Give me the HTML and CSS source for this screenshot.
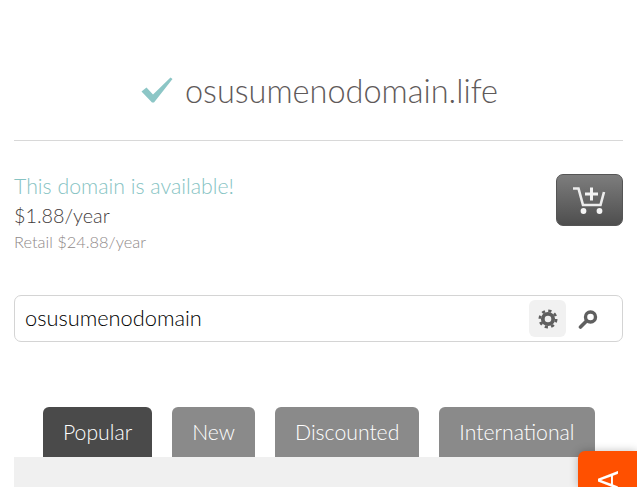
FILE: index.html
```html
<!DOCTYPE html>
<html lang="en">
<head>
<meta charset="utf-8">
<title>osusumenodomain.life</title>
<link rel="stylesheet" href="styles.css">
</head>
<body>
<main class="page">
  <header class="result-head">
    <svg class="check" viewBox="0 0 32 26" width="32" height="26" aria-hidden="true"><path d="M0.5 14.5 L5.5 10.5 L12 17.5 L29.5 0.5 L31.5 2 L13 25.5 L11 25.5 Z" fill="#8cc6c6"/></svg>
    <h1 class="domain">osusumenodomain.life</h1>
  </header>
  <section class="offer">
    <div class="offer-text">
      <p class="available">This domain is available!</p>
      <p class="price">$1.88/year</p>
      <p class="retail">Retail $24.88/year</p>
    </div>
    <button class="cart" type="button" aria-label="Add to cart">
      <svg viewBox="0 0 34 30" width="34" height="30" aria-hidden="true">
        <path d="M0 3.5 H5.5 L10 20 H27.5 L31 7" fill="none" stroke="#ececec" stroke-width="2.6"/>
        <path d="M12 9 H25 M18.5 2.5 V15.5" fill="none" stroke="#f4f4f4" stroke-width="3"/>
        <circle cx="10.5" cy="26" r="2.9" fill="#f4f4f4"/>
        <circle cx="26.5" cy="26" r="2.9" fill="#f4f4f4"/>
      </svg>
    </button>
  </section>
  <form class="search">
    <span class="query">osusumenodomain</span>
    <span class="gear-box">
      <svg viewBox="0 0 20 20" width="20" height="20" aria-hidden="true">
        <circle cx="10" cy="10" r="8.2" fill="none" stroke="#5f5f5f" stroke-width="2.6" stroke-dasharray="3.2 3.24"/>
        <circle cx="10" cy="10" r="5.2" fill="none" stroke="#5f5f5f" stroke-width="3.8"/>
      </svg>
    </span>
    <span class="magnifier">
      <svg viewBox="0 0 20 20" width="20" height="20" aria-hidden="true">
        <circle cx="12.5" cy="8" r="5" fill="none" stroke="#5f5f5f" stroke-width="3.4"/>
        <path d="M8.5 12 L2.5 18" stroke="#5f5f5f" stroke-width="3.6" stroke-linecap="round"/>
      </svg>
    </span>
  </form>
  <nav class="tabs">
    <a class="tab active">Popular</a>
    <a class="tab">New</a>
    <a class="tab">Discounted</a>
    <a class="tab">International</a>
  </nav>
  <div class="panel"></div>
</main>
<aside class="feedback"><span class="feedback-text">A</span></aside>
</body>
</html>
```
FILE: styles.css
```css
* { box-sizing: border-box; }
html, body { margin: 0; height: 487px; overflow: hidden; background: #fff; }
body { font-family: Lato, "Liberation Sans", sans-serif; color: #666; }
.page { padding: 0 14px; }
.result-head {
  height: 141px;
  padding: 70px 0 0 2px;
  display: flex;
  justify-content: center;
  align-items: flex-start;
  gap: 12px;
  border-bottom: 1px solid #d8d8d8;
}
.check { margin-top: 7px; }
.domain {
  margin: 0;
  font-size: 32.5px;
  line-height: 42px;
  font-weight: 300;
  color: #5f5a5a;
}
.offer {
  display: flex;
  justify-content: space-between;
  align-items: flex-start;
  padding: 33px 0 0;
  height: 154px;
}
.offer-text p { margin: 0; }
.available { font-size: 21.3px; line-height: 24px; font-weight: 300; color: #86c3c3; }
.price { font-size: 19.8px; line-height: 24px; margin-top: 5px !important; font-weight: 300; color: #3f3b3b; }
.retail { font-size: 16.4px; line-height: 20px; margin-top: 5px !important; font-weight: 300; color: #8f8989; }
.cart {
  width: 67px;
  height: 52px;
  padding: 0;
  border: 1px solid #555;
  border-radius: 7px;
  background: linear-gradient(#7d7d7d, #4e4e4e);
  display: flex;
  align-items: center;
  justify-content: center;
}
.search {
  height: 47px;
  border: 1px solid #d4d4d4;
  border-radius: 7px;
  display: flex;
  align-items: center;
  padding: 0 24px 0 10px;
}
.query { flex: 1; font-size: 21.8px; color: #000; font-weight: 300; margin-top: -3px; }
.gear-box {
  width: 37px;
  height: 37px;
  border-radius: 6px;
  background: #f1f1f1;
  display: flex;
  align-items: center;
  justify-content: center;
}
.magnifier { width: 20px; height: 20px; margin-left: 12px; }
.tabs {
  display: flex;
  gap: 20px;
  padding-left: 29px;
  margin-top: 65px;
}
.tab {
  height: 50px;
  padding: 12px 20px 0;
  font-size: 21.2px;
  line-height: 26px;
  font-weight: 300;
  color: #fff;
  background: #8a8a8a;
  border-radius: 6px 6px 0 0;
}
.tab.active { background: #4a4a4a; }
.panel { height: 30px; background: #f0f0f0; }
.feedback {
  position: fixed;
  right: 0;
  top: 451px;
  width: 59px;
  height: 36px;
  background: #ff5000;
  border-radius: 7px 0 0 0;
  box-shadow: 0 0 8px rgba(0,0,0,.25);
  overflow: hidden;
}
.feedback-text {
  position: absolute;
  left: 21px;
  top: 14px;
  color: #fff;
  font-size: 27px;
  line-height: 30px;
  font-weight: 400;
  transform: rotate(-90deg);
}
```
